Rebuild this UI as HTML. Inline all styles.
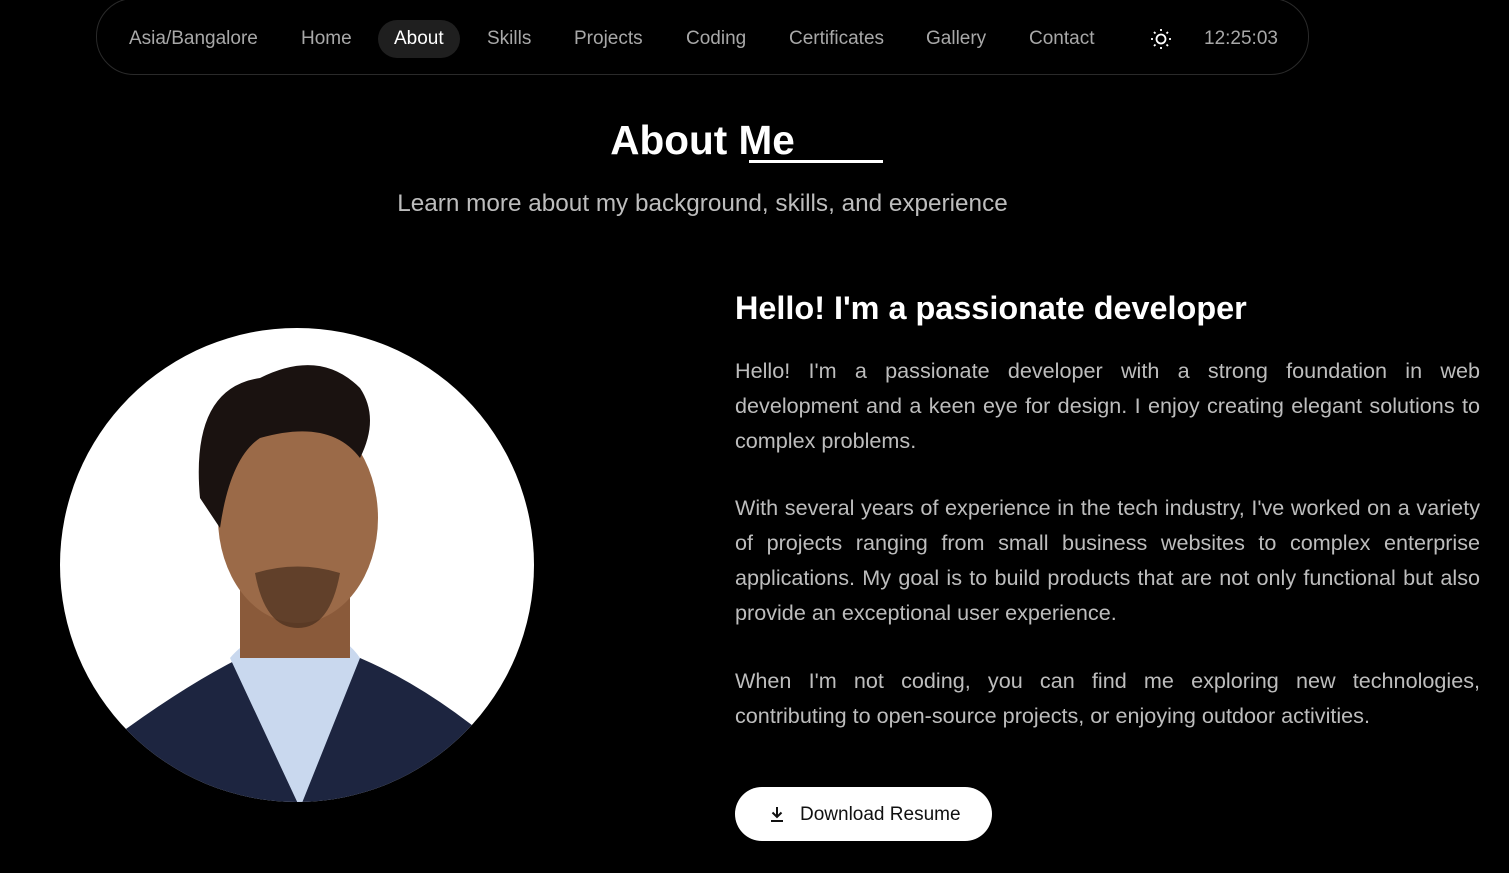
<!DOCTYPE html>
<html><head><meta charset="utf-8"><style>
*{margin:0;padding:0;box-sizing:border-box}
body{width:1509px;height:873px;background:#000;overflow:hidden;font-family:"Liberation Sans",Arial,sans-serif;position:relative;color:#fff}
.nav{position:absolute;left:96px;top:-2px;width:1213px;height:77px;border:1px solid #2a2a2a;border-radius:38px}
.nav span{position:absolute;top:29px;font-size:19px;color:#a8a8a8;line-height:22px}
.nav .act{background:#1f1f1f;color:#fff;border-radius:20px;padding:8px 16px;top:21px}
h1{position:absolute;left:0;width:1405px;text-align:center;top:117px;font-size:40.5px;font-weight:bold}
.ul{position:absolute;left:749px;top:160px;width:134px;height:3px;background:#fff}
.sub{position:absolute;left:0;width:1405px;text-align:center;top:190px;font-size:24.3px;color:#bdbdbd}
h2{position:absolute;left:735px;top:290px;font-size:32.4px;font-weight:bold}
.p{position:absolute;left:735px;width:745px;font-size:21.6px;line-height:35px;color:#bdbdbd;text-align:justify}
.btn{position:absolute;left:735px;top:787px;width:257px;height:54px;background:#fff;border-radius:27px;color:#111;font-size:19px}
.btn span{position:absolute;left:65px;top:17px}
</style></head><body>
<div class="nav">
<span style="left:32px">Asia/Bangalore</span>
<span style="left:204px">Home</span>
<span class="act" style="left:281px">About</span>
<span style="left:390px">Skills</span>
<span style="left:477px">Projects</span>
<span style="left:589px">Coding</span>
<span style="left:692px">Certificates</span>
<span style="left:829px">Gallery</span>
<span style="left:932px">Contact</span>
<svg style="position:absolute;left:1053px;top:29px" width="22" height="22" viewBox="0 0 22 22" stroke="#fff" stroke-width="1.8" fill="none"><circle cx="11" cy="11" r="4.5"/><path d="M11 1v2M11 19v2M1 11h2M19 11h2M4 4l1.5 1.5M16.5 16.5L18 18M4 18l1.5-1.5M16.5 5.5L18 4"/></svg>
<span style="left:1107px">12:25:03</span>
</div>
<h1>About Me</h1><div class="ul"></div>
<div class="sub">Learn more about my background, skills, and experience</div>
<svg style="position:absolute;left:60px;top:328px" width="475" height="475" viewBox="0 0 475 475">
<defs><clipPath id="c"><circle cx="237" cy="237" r="237"/></clipPath></defs>
<circle cx="237" cy="237" r="237" fill="#fff"/>
<g clip-path="url(#c)">
<path d="M40 420 Q120 360 180 330 L300 330 Q370 360 440 420 L440 480 L40 480Z" fill="#1d2540"/>
<path d="M170 330 L240 480 L300 330 Q280 300 240 305 Q195 300 170 330Z" fill="#c9d8ee"/>
<rect x="180" y="230" width="110" height="100" fill="#8a5a3a"/>
<ellipse cx="238" cy="190" rx="80" ry="105" fill="#9b6a48"/>
<path d="M140 170 Q130 60 200 50 Q260 20 300 60 Q320 90 300 130 Q270 90 200 110 Q170 130 160 200Z" fill="#1a1210"/>
<path d="M195 245 Q238 232 280 245 Q270 300 238 300 Q205 300 195 245Z" fill="#3a2418" opacity=".6"/>
</g></svg>
<h2>Hello! I'm a passionate developer</h2>
<div class="p" style="top:353px">Hello! I'm a passionate developer with a strong foundation in web development and a keen eye for design. I enjoy creating elegant solutions to complex problems.</div>
<div class="p" style="top:490px">With several years of experience in the tech industry, I've worked on a variety of projects ranging from small business websites to complex enterprise applications. My goal is to build products that are not only functional but also provide an exceptional user experience.</div>
<div class="p" style="top:663px">When I'm not coding, you can find me exploring new technologies, contributing to open-source projects, or enjoying outdoor activities.</div>
<div class="btn"><svg style="position:absolute;left:33px;top:18px" width="18" height="18" viewBox="0 0 18 18" stroke="#111" stroke-width="2" fill="none"><path d="M9 2v10M4.5 7.5L9 12l4.5-4.5M3 16h12"/></svg><span>Download Resume</span></div>
</body></html>
